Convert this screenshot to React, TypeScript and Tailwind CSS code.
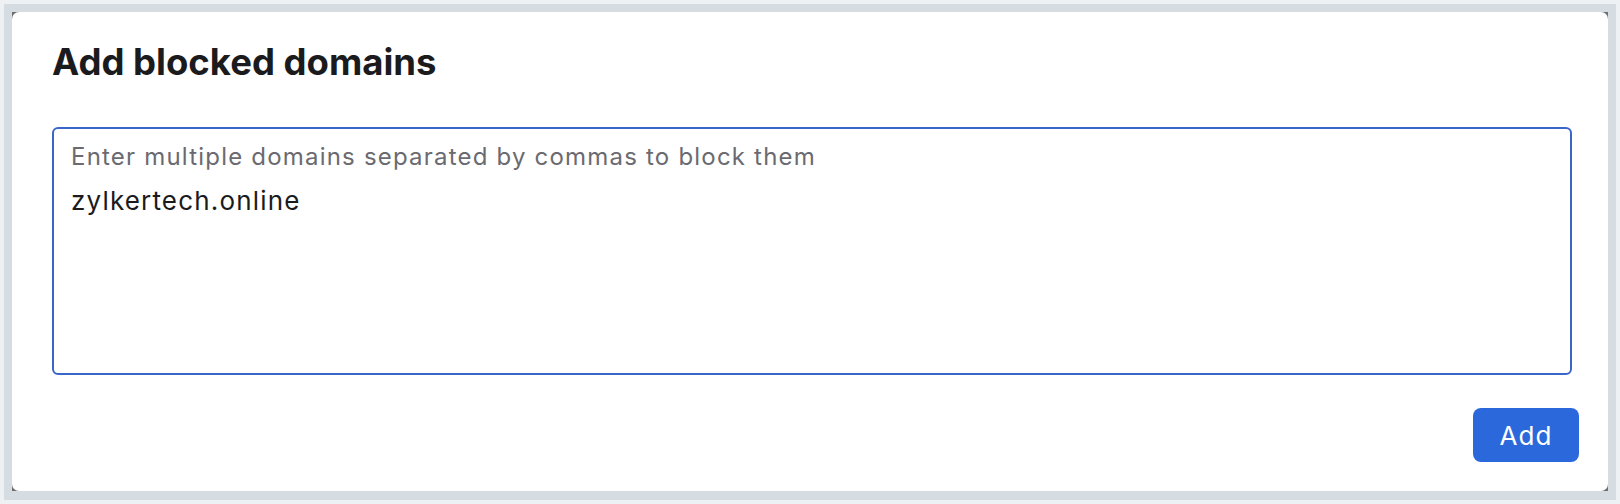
export default function App() {
  return (
    <div className="h-[504px] w-[1620px] bg-[#eef1f4] p-1 font-['Inter',sans-serif]">
      <div className="h-[496px] bg-[#d5dde3] p-2">
        <div className="h-[479px] w-[1596px] bg-[#6e6e6e]">
          <div className="flex h-full flex-col rounded-[7px] bg-white pl-10 pr-[29px] pt-[27px]">
            <h1 className="text-[36.5px] font-bold leading-[46px] text-[#1b1b1d]">
              Add blocked domains
            </h1>

            <div className="mt-[42px] h-[248px] w-[1520px] rounded-md border-2 border-[#3a66c7] px-[17px] pt-[12px]">
              <div className="text-[24px] leading-[32px] tracking-[0.05em] text-[#6a6a70]">
                Enter multiple domains separated by commas to block them
              </div>
              <div className="mt-[11px] text-[26px] leading-[34px] tracking-[0.045em] text-[#1b1b1d]">
                zylkertech.online
              </div>
            </div>

            <div className="mt-[33px] flex justify-end">
              <button className="h-[54px] w-[106px] rounded-lg bg-[#2b68dc] text-[26px] tracking-[0.04em] text-white">
                Add
              </button>
            </div>
          </div>
        </div>
      </div>
    </div>
  );
}
